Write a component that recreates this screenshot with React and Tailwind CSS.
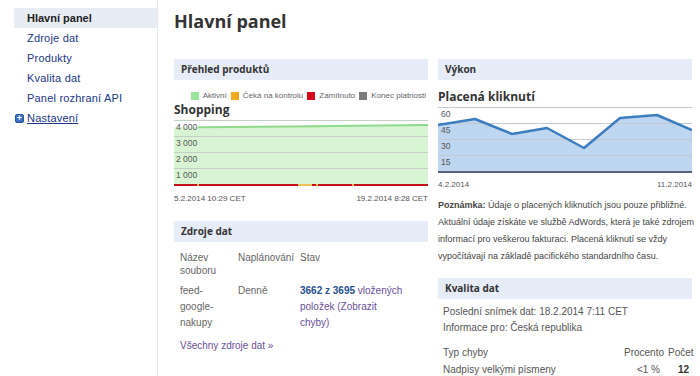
import React from 'react';

const head = { fontFamily: '"Open Sans", "Liberation Sans", sans-serif' };
const body = { fontFamily: '"Liberation Sans", Arial, sans-serif' };

const navItems = ['Zdroje dat', 'Produkty', 'Kvalita dat', 'Panel rozhraní API'];

const PanelHeader = ({ children }) => (
    <div className="h-[21px] bg-[#e6ecf8] pl-[7px] text-[10px] leading-[21px] font-bold text-[#333]" style={head}>
        {children}
    </div>
);

const ShoppingChart = () => (
    <svg width="254" height="67" viewBox="0 0 254 67" className="block">
        <polygon points="0,7.5 60,7 120,6.5 180,5.8 254,5 254,64 0,64" fill="#d8f5d3" />
        {[0.5, 16.5, 32.5, 48.5].map(y => (
            <line key={y} x1="0" x2="254" y1={y} y2={y} stroke="#c6cfc4" strokeWidth="1" />
        ))}
        <polyline points="24,7.2 60,7 120,6.5 180,5.8 254,5" fill="none" stroke="#8edb8b" strokeWidth="2" />
        <line x1="0" x2="254" y1="65" y2="65" stroke="#c4121c" strokeWidth="2" />
        <line x1="23" x2="25" y1="65" y2="65" stroke="#f3b544" strokeWidth="2" />
        <line x1="124" x2="138" y1="65" y2="65" stroke="#f3c35a" strokeWidth="2" />
        <line x1="142" x2="144" y1="65" y2="65" stroke="#f3b544" strokeWidth="2" />
        <line x1="178" x2="180" y1="65" y2="65" stroke="#f3b544" strokeWidth="2" />
        <g fontSize="8.5" fill="#555" style={body}>
            <text x="2" y="9.5">4 000</text>
            <text x="2" y="26">3 000</text>
            <text x="2" y="42">2 000</text>
            <text x="2" y="58">1 000</text>
        </g>
    </svg>
);

const ClicksChart = () => {
    const pts = '0,18 37,12 74,27 109,21 146,41 182,11 219,8 254,23';
    return (
        <svg width="254" height="67" viewBox="0 0 254 67" className="block">
            <polygon points={`${pts} 254,65 0,65`} fill="#bed6ef" />
            {[0.5, 16.5, 32.5, 48.5].map(y => (
                <line key={y} x1="0" x2="254" y1={y} y2={y} stroke="#c4c9cf" strokeWidth="1" />
            ))}
            <polyline points={pts} fill="none" stroke="#3d7cbf" strokeWidth="2.5" strokeLinejoin="round" />
            <line x1="0" x2="254" y1="65" y2="65" stroke="#56657a" strokeWidth="2" />
            <g fontSize="8.5" fill="#555" style={body}>
                <text x="3" y="9.5">60</text>
                <text x="3" y="25.5">45</text>
                <text x="3" y="41.5">30</text>
                <text x="3" y="57.5">15</text>
            </g>
        </svg>
    );
};

const Legend = () => {
    const items = [
        ['Aktivní', '#9ce39a'],
        ['Čeká na kontrolu', '#f5a81c'],
        ['Zamítnuto', '#d1061c'],
        ['Konec platnosti', '#7b7b7b'],
    ];
    return (
        <div className="flex justify-end gap-[4px] h-[10px] items-center text-[8px] text-[#666] whitespace-nowrap" style={body}>
            {items.map(([label, color]) => (
                <div key={label} className="flex items-center gap-[4px]">
                    <span className="w-[8px] h-[8px] inline-block" style={{ background: color }} />
                    <span>{label}</span>
                </div>
            ))}
        </div>
    );
};

export default function App() {
    return (
        <div className="w-[700px] h-[376px] overflow-hidden bg-white flex" style={body}>
            <aside className="w-[158px] shrink-0 border-r border-[#e6e9ef] pt-[8px] pl-[14px]">
                <div className="h-[20px] bg-[#e8ecf5] pl-[13px] flex items-center text-[11px] font-bold text-[#222]">
                    Hlavní panel
                </div>
                {navItems.map(item => (
                    <div key={item} className="h-[20px] pl-[13px] flex items-center text-[11px] tracking-[0.2px] text-[#21378a]">
                        {item}
                    </div>
                ))}
                <div className="h-[20px] pl-[1px] flex items-center gap-[3px] text-[11px] tracking-[0.2px] text-[#21378a]">
                    <span className="w-[9px] h-[9px] rounded-[2px] bg-[#3a6fc4] border border-[#2a56a0] text-white text-[9px] leading-[7px] flex items-center justify-center font-bold">+</span>
                    <span className="underline">Nastavení</span>
                </div>
            </aside>

            <main className="pl-[16px] pt-[10px]">
                <h1 className="text-[18px] leading-[22px] font-bold text-[#333]" style={head}>Hlavní panel</h1>

                <div className="mt-[27px] grid grid-cols-[254px_254px] gap-[10px]">
                    <section>
                        <PanelHeader>Přehled produktů</PanelHeader>
                        <div className="mt-[11px] pr-[2px]">
                            <Legend />
                        </div>
                        <div className="mt-[2px] text-[12px] leading-[14px] font-bold text-[#333]" style={head}>Shopping</div>
                        <div className="mt-[3px]">
                            <ShoppingChart />
                        </div>
                        <div className="mt-[6px] flex justify-between text-[8px] leading-[12px] text-[#555]">
                            <span>5.2.2014 10:29 CET</span>
                            <span>19.2.2014 8:28 CET</span>
                        </div>

                        <div className="mt-[16px]">
                            <PanelHeader>Zdroje dat</PanelHeader>
                        </div>
                        <div className="mt-[9px] pl-[6px] grid grid-cols-[58px_62px_1fr] text-[10px] text-[#666]">
                            <div className="leading-[13px]">Název<br />souboru</div>
                            <div className="leading-[13px]">Naplánování</div>
                            <div className="leading-[13px]">Stav</div>
                            <div className="pt-[6px] leading-[16px]">feed-<br />google-<br />nakupy</div>
                            <div className="pt-[6px] leading-[16px]">Denně</div>
                            <div className="pt-[6px] leading-[16px] text-[#6a4f98] whitespace-nowrap">
                                <span className="font-bold text-[#27508f]">3662 z 3695</span> vložených<br />
                                položek (Zobrazit<br />
                                chyby)
                            </div>
                        </div>
                        <div className="mt-[7px] pl-[6px] text-[10px] leading-[16px] text-[#6a4f98]">Všechny zdroje dat »</div>
                    </section>

                    <section>
                        <PanelHeader>Výkon</PanelHeader>
                        <div className="mt-[10px] text-[12px] leading-[14px] font-bold text-[#333]" style={head}>Placená kliknutí</div>
                        <div className="mt-[3px]">
                            <ClicksChart />
                        </div>
                        <div className="mt-[5px] flex justify-between text-[8px] leading-[12px] text-[#555]">
                            <span>4.2.2014</span>
                            <span>11.2.2014</span>
                        </div>
                        <p className="mt-[6px] text-[9px] leading-[17px] text-[#444] whitespace-nowrap">
                            <span className="font-bold">Poznámka:</span> Údaje o placených kliknutích jsou pouze přibližné.<br />
                            Aktuální údaje získáte ve službě AdWords, která je také zdrojem<br />
                            informací pro veškerou fakturaci. Placená kliknutí se vždy<br />
                            vypočítávají na základě pacifického standardního času.
                        </p>

                        <div className="mt-[13px]">
                            <PanelHeader>Kvalita dat</PanelHeader>
                        </div>
                        <div className="mt-[5px] pl-[5px] text-[10px] leading-[16px] text-[#555]">
                            <div>Poslední snímek dat: 18.2.2014 7:11 CET</div>
                            <div>Informace pro: Česká republika</div>
                        </div>
                        <div className="mt-[8px] pl-[5px] grid grid-cols-[1fr_auto_24px] gap-x-[4px] text-[10px] leading-[17px] text-[#555]">
                            <div>Typ chyby</div>
                            <div className="text-right">Procento</div>
                            <div>Počet</div>
                            <div>Nadpisy velkými písmeny</div>
                            <div className="text-right pr-[4px]">&lt;1 %</div>
                            <div className="text-right pr-[3px] font-bold text-[#333]">12</div>
                        </div>
                    </section>
                </div>
            </main>
        </div>
    );
}
